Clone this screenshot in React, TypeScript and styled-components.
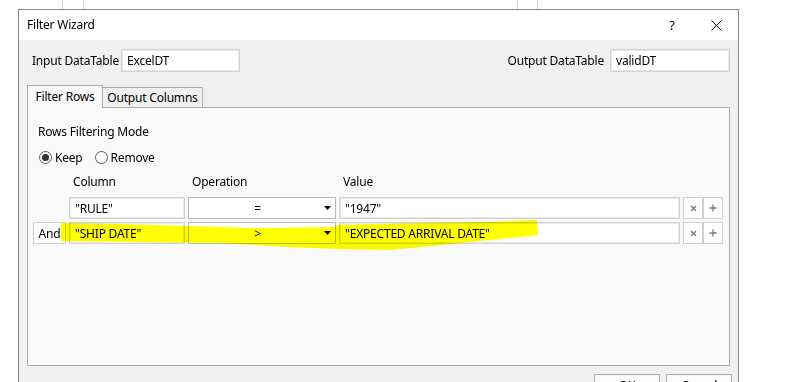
import React from 'react';
import styled, { createGlobalStyle } from 'styled-components';

const GlobalStyle = createGlobalStyle`
  html, body { margin: 0; padding: 0; background: #ffffff; overflow: hidden; }
  body {
    font-family: "Segoe UI", "Noto Sans", "Open Sans", sans-serif;
    font-size: 12px;
    letter-spacing: -0.2px;
    color: #000;
  }
  * { box-sizing: border-box; }
`;

const Page = styled.div`
  position: relative;
  width: 796px;
  height: 382px;
  overflow: hidden;
  background: #ffffff;
`;

const Backdrop = styled.div`
  display: flex;
  height: 9px;
`;

const BackdropCol = styled.div<{ $w: number }>`
  flex: none;
  width: ${(p) => p.$w}px;
  border-right: 1px solid #d4d4d4;
`;

const Dialog = styled.div`
  margin-left: 18px;
  width: 721px;
  border: 1px solid #858585;
  background: #f0f0f0;
`;

const TitleBar = styled.div`
  display: flex;
  align-items: center;
  height: 30px;
  background: #ffffff;
  padding-left: 8px;
`;

const Title = styled.div`
  flex: 1;
  font-size: 12px;
  line-height: 16px;
`;

const CaptionButton = styled.div`
  flex: none;
  width: 44px;
  height: 30px;
  display: flex;
  align-items: center;
  justify-content: center;
  font-size: 13px;
`;

const Body = styled.div`
  padding: 9px 8px 0 8px;
`;

const IORow = styled.div`
  display: flex;
  align-items: center;
  justify-content: space-between;
  height: 23px;
`;

const Field = styled.div`
  display: flex;
  align-items: center;
`;

const FieldLabel = styled.span<{ $w?: number; $indent?: number }>`
  ${(p) => (p.$w ? `width: ${p.$w}px;` : 'margin-right: 6px;')}
  margin-left: ${(p) => p.$indent ?? 0}px;
  white-space: nowrap;
`;

const TextBox = styled.div<{ $w: number }>`
  width: ${(p) => p.$w}px;
  height: 23px;
  display: flex;
  align-items: center;
  padding-left: 5px;
  background: #ffffff;
  border: 1px solid #d2d2d2;
  box-shadow: inset 0 0 0 1px #e8e8e8;
`;

const TabStrip = styled.div`
  display: flex;
  align-items: flex-end;
  height: 22px;
  margin-top: 13px;
  position: relative;
  z-index: 1;
`;

const Tab = styled.div<{ $active?: boolean; $w: number }>`
  width: ${(p) => p.$w}px;
  height: ${(p) => (p.$active ? 23 : 20)}px;
  margin-bottom: ${(p) => (p.$active ? -1 : 0)}px;
  margin-left: ${(p) => (p.$active ? 0 : -1)}px;
  display: flex;
  align-items: center;
  justify-content: center;
  padding-bottom: ${(p) => (p.$active ? 2 : 0)}px;
  border: 1px solid #acacac;
  border-bottom: none;
  background: ${(p) => (p.$active ? '#f9f9f9' : '#f0f0f0')};
`;

const Panel = styled.div`
  height: 259px;
  border: 1px solid #acacac;
  background: #f9f9f9;
  padding-top: 16px;
`;

const SectionLabel = styled.div`
  padding-left: 10px;
  line-height: 16px;
`;

const RadioRow = styled.div`
  display: flex;
  align-items: center;
  height: 16px;
  margin-top: 9px;
  padding-left: 11px;
`;

const RadioOption = styled.label<{ $gap?: number }>`
  display: flex;
  align-items: center;
  margin-left: ${(p) => p.$gap ?? 0}px;
`;

const RadioCircle = styled.span<{ $checked?: boolean }>`
  width: 13px;
  height: 13px;
  border-radius: 50%;
  border: 1px solid #5a5a5a;
  background: #ffffff;
  display: flex;
  align-items: center;
  justify-content: center;
  &::after {
    content: '';
    display: ${(p) => (p.$checked ? 'block' : 'none')};
    width: 7px;
    height: 7px;
    border-radius: 50%;
    background: #333333;
  }
`;

const RadioText = styled.span`
  margin-left: 3px;
`;

const Grid = styled.div`
  display: grid;
  grid-template-columns: 33px 116px 148px 341px 40px;
  column-gap: 3px;
  row-gap: 3px;
  margin: 9px 0 0 5px;
`;

const HeaderCell = styled.div<{ $col: number }>`
  grid-column: ${(p) => p.$col};
  height: 16px;
  line-height: 16px;
  padding-left: 4px;
  margin-bottom: 4px;
`;

const AndBox = styled.div`
  grid-column: 1;
  height: 22px;
  display: flex;
  align-items: center;
  justify-content: center;
  background: #ffffff;
  border: 1px solid #cfcfcf;
`;

const Cell = styled.div<{ $col: number }>`
  grid-column: ${(p) => p.$col};
  height: 22px;
  display: flex;
  align-items: center;
  padding-left: 5px;
  background: #ffffff;
  border: 1px solid #d2d2d2;
  box-shadow: inset 0 0 0 1px #e8e8e8;
  white-space: nowrap;
  overflow: hidden;
`;

const Combo = styled.div`
  grid-column: 3;
  height: 22px;
  display: flex;
  align-items: center;
  background: #ffffff;
  border: 1px solid #b9b9b9;
`;

const ComboText = styled.span`
  flex: 1;
  text-align: center;
  padding-left: 2px;
`;

const ComboArrow = styled.svg`
  width: 7px;
  height: 4px;
  margin-right: 4px;
`;

const RowButtons = styled.div`
  grid-column: 5;
  display: flex;
  gap: 0;
`;

const SmallButton = styled.div`
  width: 20px;
  height: 22px;
  display: flex;
  align-items: center;
  justify-content: center;
  background: #ffffff;
  border: 1px solid #cfcfcf;
`;

const Footer = styled.div`
  display: flex;
  justify-content: flex-end;
  gap: 6px;
  margin-top: 8px;
  margin-right: -2px;
`;

const DialogButton = styled.div`
  width: 66px;
  height: 23px;
  display: flex;
  align-items: center;
  justify-content: center;
  border: 1px solid #adadad;
  background: #fbfbfb;
`;

const Highlight = styled.svg`
  position: absolute;
  left: 0;
  top: 0;
  width: 796px;
  height: 382px;
  pointer-events: none;
  mix-blend-mode: multiply;
`;

const DeleteIcon = () => (
  <svg width="7" height="7" viewBox="0 0 7 7">
    <path d="M1 1 L6 6 M6 1 L1 6" stroke="#7a7a7a" strokeWidth="1.4" />
  </svg>
);

const AddIcon = () => (
  <svg width="8" height="8" viewBox="0 0 8 8">
    <path d="M4 0.5 V7.5 M0.5 4 H7.5" stroke="#7a7a7a" strokeWidth="1.3" />
  </svg>
);

const Arrow = () => (
  <ComboArrow viewBox="0 0 7 4">
    <polygon points="0,0 7,0 3.5,4" fill="#000" />
  </ComboArrow>
);

const rows = [
  { conj: '', column: '"RULE"', op: '=', value: '"1947"' },
  { conj: 'And', column: '"SHIP DATE"', op: '>', value: '"EXPECTED ARRIVAL DATE"' },
];

export default function App() {
  return (
    <Page>
      <GlobalStyle />
      <Backdrop>
        <BackdropCol $w={63} />
        <BackdropCol $w={21} />
        <BackdropCol $w={434} />
        <BackdropCol $w={20} />
      </Backdrop>
      <Dialog>
        <TitleBar>
          <Title>Filter Wizard</Title>
          <CaptionButton>?</CaptionButton>
          <CaptionButton>
            <svg width="11" height="11" viewBox="0 0 11 11">
              <path d="M0.5 0.5 L10.5 10.5 M10.5 0.5 L0.5 10.5" stroke="#000" strokeWidth="1" />
            </svg>
          </CaptionButton>
        </TitleBar>
        <Body>
          <IORow>
            <Field>
              <FieldLabel $w={89} $indent={5}>Input DataTable</FieldLabel>
              <TextBox $w={119}>ExcelDT</TextBox>
            </Field>
            <Field>
              <FieldLabel>Output DataTable</FieldLabel>
              <TextBox $w={120}>validDT</TextBox>
            </Field>
          </IORow>
          <TabStrip>
            <Tab $active $w={76}>Filter Rows</Tab>
            <Tab $w={101}>Output Columns</Tab>
          </TabStrip>
          <Panel>
            <SectionLabel>Rows Filtering Mode</SectionLabel>
            <RadioRow>
              <RadioOption>
                <RadioCircle $checked />
                <RadioText>Keep</RadioText>
              </RadioOption>
              <RadioOption $gap={12}>
                <RadioCircle />
                <RadioText>Remove</RadioText>
              </RadioOption>
            </RadioRow>
            <Grid>
              <HeaderCell $col={2}>Column</HeaderCell>
              <HeaderCell $col={3}>Operation</HeaderCell>
              <HeaderCell $col={4}>Value</HeaderCell>
              {rows.map((r, i) => (
                <React.Fragment key={i}>
                  {r.conj ? <AndBox>{r.conj}</AndBox> : null}
                  <Cell $col={2}>{r.column}</Cell>
                  <Combo>
                    <ComboText>{r.op}</ComboText>
                    <Arrow />
                  </Combo>
                  <Cell $col={4}>{r.value}</Cell>
                  <RowButtons>
                    <SmallButton><DeleteIcon /></SmallButton>
                    <SmallButton><AddIcon /></SmallButton>
                  </RowButtons>
                </React.Fragment>
              ))}
            </Grid>
          </Panel>
          <Footer>
            <DialogButton>OK</DialogButton>
            <DialogButton>Cancel</DialogButton>
          </Footer>
        </Body>
      </Dialog>
      <Highlight viewBox="0 0 796 382">
        <path
          d="M61 223 L120 224 L188 226 L255 228 L335 227 L338 225 L420 223 L488 222 L537 220 L538 235 L500 239 L470 242 L422 247 L388 250 L338 249 L288 247 L222 243 L145 242 L61 241 Z"
          fill="#ffff00"
        />
      </Highlight>
    </Page>
  );
}
